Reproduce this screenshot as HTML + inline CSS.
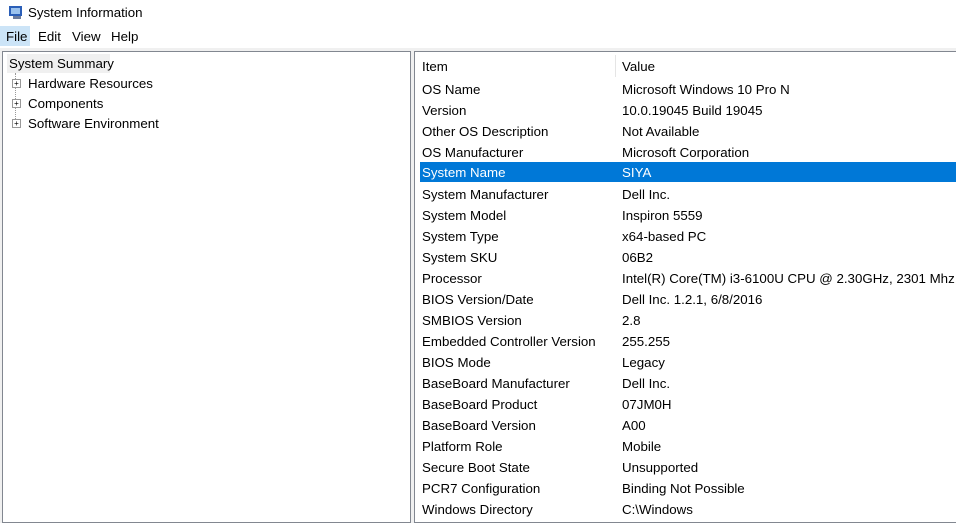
<html><head><style>
body{margin:0;width:956px;height:520px;background:#f0f0f0;font-family:"Liberation Sans",sans-serif;font-size:13.3px;color:#000;position:relative;overflow:hidden}
.a{position:absolute;white-space:nowrap}
.r{position:absolute;left:416px;width:540px;height:21px;line-height:23px;white-space:nowrap;overflow:hidden}
.r span{position:absolute}
.r .i{left:6px}.r .v{left:206px}
</style></head><body>
<div class="a" style="left:0;top:0;width:956px;height:48px;background:#fff"></div>
<svg class="a" style="left:8px;top:4px" width="16" height="16"><rect x="1" y="2" width="13" height="10" fill="#2b5fb8"/><rect x="3" y="4" width="9" height="6" fill="#9cc3ee"/><rect x="5" y="12" width="8" height="3" fill="#6c7c9c"/></svg>
<div class="a" style="left:28px;top:5px">System Information</div>
<div class="a" style="left:0;top:26px;width:30px;height:20px;background:#cce4f7"></div>
<div class="a" style="left:6px;top:29px">File</div>
<div class="a" style="left:38px;top:29px">Edit</div>
<div class="a" style="left:72px;top:29px">View</div>
<div class="a" style="left:111px;top:29px">Help</div>
<div class="a" style="left:2px;top:51px;width:407px;height:470px;background:#fff;border:1px solid #828790"></div>
<div class="a" style="left:15px;top:73px;height:50px;border-left:1px dotted #999"></div>
<div class="a" style="left:7px;top:54px;width:103px;height:19px;background:#f0f0f0"></div>
<div class="a" style="left:9px;top:56px">System Summary</div>
<div class="a" style="left:12px;top:79px;width:7px;height:7px;border:1px solid #999;background:#fff;font-size:8px;line-height:7px;text-align:center">+</div>
<div class="a" style="left:12px;top:99px;width:7px;height:7px;border:1px solid #999;background:#fff;font-size:8px;line-height:7px;text-align:center">+</div>
<div class="a" style="left:12px;top:119px;width:7px;height:7px;border:1px solid #999;background:#fff;font-size:8px;line-height:7px;text-align:center">+</div>
<div class="a" style="left:28px;top:76px">Hardware Resources</div>
<div class="a" style="left:28px;top:96px">Components</div>
<div class="a" style="left:28px;top:116px">Software Environment</div>
<div class="a" style="left:414px;top:51px;width:542px;height:470px;background:#fff;border:1px solid #828790;border-right:none"></div>
<div class="a" style="left:615px;top:55px;width:1px;height:22px;background:#e5e5e5"></div>
<div class="r" style="top:55px"><span class="i">Item</span><span class="v">Value</span></div>
<div class="r" style="top:78px"><span class="i">OS Name</span><span class="v">Microsoft Windows 10 Pro N</span></div>
<div class="r" style="top:99px"><span class="i">Version</span><span class="v">10.0.19045 Build 19045</span></div>
<div class="r" style="top:120px"><span class="i">Other OS Description</span><span class="v">Not Available</span></div>
<div class="r" style="top:141px"><span class="i">OS Manufacturer</span><span class="v">Microsoft Corporation</span></div>
<div class="r" style="top:162px;left:420px;width:536px;height:20px;line-height:22px;background:#0078d7;color:#fff"><span class="i" style="left:2px">System Name</span><span class="v" style="left:202px">SIYA</span></div>
<div class="r" style="top:183px"><span class="i">System Manufacturer</span><span class="v">Dell Inc.</span></div>
<div class="r" style="top:204px"><span class="i">System Model</span><span class="v">Inspiron 5559</span></div>
<div class="r" style="top:225px"><span class="i">System Type</span><span class="v">x64-based PC</span></div>
<div class="r" style="top:246px"><span class="i">System SKU</span><span class="v">06B2</span></div>
<div class="r" style="top:267px"><span class="i">Processor</span><span class="v">Intel(R) Core(TM) i3-6100U CPU @ 2.30GHz, 2301 Mhz, 2 Core(s)</span></div>
<div class="r" style="top:288px"><span class="i">BIOS Version/Date</span><span class="v">Dell Inc. 1.2.1, 6/8/2016</span></div>
<div class="r" style="top:309px"><span class="i">SMBIOS Version</span><span class="v">2.8</span></div>
<div class="r" style="top:330px"><span class="i">Embedded Controller Version</span><span class="v">255.255</span></div>
<div class="r" style="top:351px"><span class="i">BIOS Mode</span><span class="v">Legacy</span></div>
<div class="r" style="top:372px"><span class="i">BaseBoard Manufacturer</span><span class="v">Dell Inc.</span></div>
<div class="r" style="top:393px"><span class="i">BaseBoard Product</span><span class="v">07JM0H</span></div>
<div class="r" style="top:414px"><span class="i">BaseBoard Version</span><span class="v">A00</span></div>
<div class="r" style="top:435px"><span class="i">Platform Role</span><span class="v">Mobile</span></div>
<div class="r" style="top:456px"><span class="i">Secure Boot State</span><span class="v">Unsupported</span></div>
<div class="r" style="top:477px"><span class="i">PCR7 Configuration</span><span class="v">Binding Not Possible</span></div>
<div class="r" style="top:498px"><span class="i">Windows Directory</span><span class="v">C:\Windows</span></div>
</body></html>
